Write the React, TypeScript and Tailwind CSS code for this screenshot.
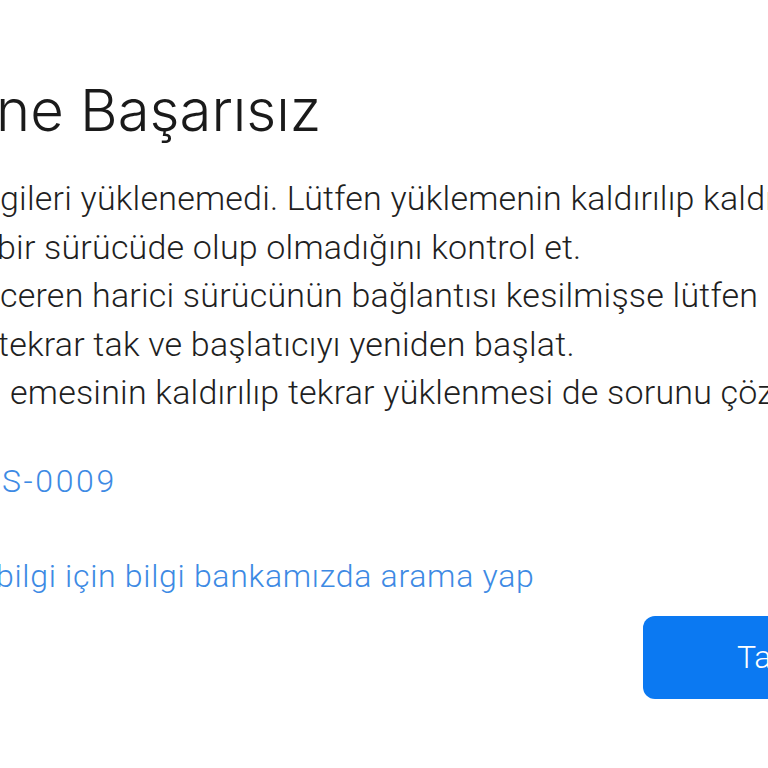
import React from "react";

export default function App() {
  const body = { fontFamily: 'Roboto, "Liberation Sans", sans-serif' };
  const link = { fontFamily: 'Roboto, "Liberation Sans", sans-serif' };
  return (
    <div className="relative w-full h-[768px] overflow-hidden bg-white">
      <div className="flex flex-col">
        <div
          className="ml-[-4px] mt-[78px] h-[64px] whitespace-nowrap text-[58px] leading-[64px] font-light text-[#1a1a1a]"
          style={{ fontFamily: 'Inter, Roboto, sans-serif' }}
        >
          ne Başarısız
        </div>
        <div className="mt-[32px] flex flex-col text-[34px] leading-[48.5px] font-light tracking-[0.2px] text-[#1f1f1f]" style={body}>
          <div className="whitespace-nowrap">gileri yüklenemedi. Lütfen yüklemenin kaldırılıp kaldırılmadığını</div>
          <div className="whitespace-nowrap ml-[-3px]">bir sürücüde olup olmadığını kontrol et.</div>
          <div className="whitespace-nowrap">ceren harici sürücünün bağlantısı kesilmişse lütfen</div>
          <div className="whitespace-nowrap ml-[-2px]">tekrar tak ve başlatıcıyı yeniden başlat.</div>
          <div className="whitespace-nowrap ml-[10px]">emesinin kaldırılıp tekrar yüklenmesi de sorunu çözebilir.</div>
        </div>
        <div className="mt-[44px] whitespace-nowrap text-[32px] leading-[40px] font-light tracking-[2.6px] text-[#3d8ae4] ml-[2px]" style={link}>
          S-0009
        </div>
        <div className="mt-[55px] whitespace-nowrap text-[32px] leading-[40px] font-light tracking-[0.7px] text-[#3d8ae4] ml-[-4px]" style={link}>
          bilgi için bilgi bankamızda arama yap
        </div>
        <div className="flex justify-end mt-[20px] mr-[-40px]">
          <button
            className="w-[165px] h-[83px] rounded-[12px] bg-[#0b79f2] text-white text-[32px] font-light text-left pl-[94px] whitespace-nowrap"
            style={link}
          >
            Tamam
          </button>
        </div>
      </div>
    </div>
  );
}
